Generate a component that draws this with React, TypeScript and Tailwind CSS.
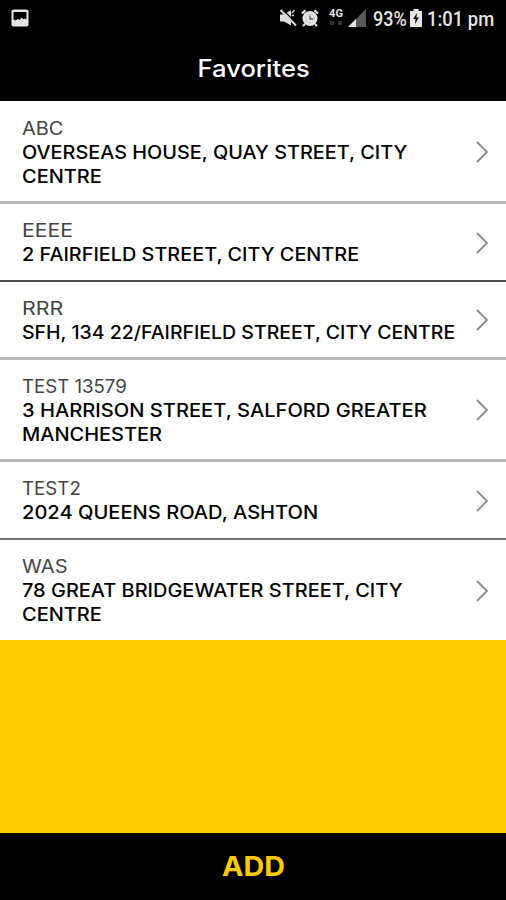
import clsx from 'clsx'

interface Line {
  text: string
  stretch: string
}

interface Favorite {
  name: Line
  address: Line[]
  className: string
}

const favorites: Favorite[] = [
  {
    name: { text: 'ABC', stretch: 'scale-x-[1.11]' },
    address: [
      { text: 'OVERSEAS HOUSE, QUAY STREET, CITY', stretch: 'scale-x-[1.103]' },
      { text: 'CENTRE', stretch: 'scale-x-[1.11]' }
    ],
    className: 'h-[103px] border-b-[3px] border-[#b8b8b8] pt-4'
  },
  {
    name: { text: 'EEEE', stretch: 'scale-x-[1.18]' },
    address: [{ text: '2 FAIRFIELD STREET, CITY CENTRE', stretch: 'scale-x-[1.102]' }],
    className: 'h-[78px] border-b-2 border-[#505050] pt-[15px]'
  },
  {
    name: { text: 'RRR', stretch: 'scale-x-[1.19]' },
    address: [
      { text: 'SFH, 134 22/FAIRFIELD STREET, CITY CENTRE', stretch: 'scale-x-[1.083]' }
    ],
    className: 'h-[78px] border-b-[3px] border-[#b8b8b8] pt-[15px]'
  },
  {
    name: { text: 'TEST 13579', stretch: 'scale-x-[1.035]' },
    address: [
      { text: '3 HARRISON STREET, SALFORD GREATER', stretch: 'scale-x-[1.118]' },
      { text: 'MANCHESTER', stretch: 'scale-x-[1.11]' }
    ],
    className: 'h-[102px] border-b-[3px] border-[#b8b8b8] pt-[15px]'
  },
  {
    name: { text: 'TEST2', stretch: 'scale-x-[1.04]' },
    address: [{ text: '2024 QUEENS ROAD, ASHTON', stretch: 'scale-x-[1.117]' }],
    className: 'h-[78px] border-b-2 border-[#707070] pt-[15px]'
  },
  {
    name: { text: 'WAS', stretch: 'scale-x-[1.12]' },
    address: [
      { text: '78 GREAT BRIDGEWATER STREET, CITY', stretch: 'scale-x-[1.108]' },
      { text: 'CENTRE', stretch: 'scale-x-[1.11]' }
    ],
    className: 'h-[100px] pt-[15px]'
  }
]

const PictureIcon = () => (
  <svg className="h-[18px] w-[18px]" viewBox="0 0 18 18">
    <rect x="0.500" y="0.500" width="17" height="17" rx="2" fill="#e6e6e6" />
    <path d="M2.500 3h13v7.500l-1.500-1-1.500 1-2-2-2 2.500-2-1-2 1.500-2-1z" fill="#000" />
  </svg>
)

const MuteIcon = () => (
  <svg className="h-[18px] w-[18px]" viewBox="0 0 18 18">
    <path d="M1 5.500h4L12 1v15.500L5 12.500H1z" fill="#ddd" />
    <path d="M13 4l2.500-3M13 6.500h2" stroke="#ddd" strokeWidth="1.300" />
    <path d="M4 1l14 14" stroke="#000" strokeWidth="1.300" />
    <path d="M1.500 1l15.500 15.500" stroke="#ddd" strokeWidth="2" />
  </svg>
)

const AlarmIcon = () => (
  <svg className="h-[18px] w-[18px]" viewBox="0 0 18 18" fill="none">
    <circle cx="9" cy="9.500" r="7.500" fill="#e8e8e8" />
    <path d="M1 4.500L4.500 1.200M17 4.500l-3.500-3.300M4 15l-2 2M14 15l2 2" stroke="#e8e8e8" strokeWidth="2.200" />
    <circle cx="9" cy="9.500" r="4.300" stroke="#bbb" strokeWidth="0.800" />
    <path d="M9 6.500V10h3" stroke="#555" strokeWidth="1.300" />
  </svg>
)

const SignalIcon = () => (
  <svg className="h-[18px] w-[18px]" viewBox="0 0 18 18">
    <path d="M0 18L18 0v18z" fill="#585858" />
    <path d="M0 18l8-8v8z" fill="#e8e8e8" />
  </svg>
)

const BatteryIcon = () => (
  <svg className="h-[18px] w-3" viewBox="0 0 12 18">
    <path d="M0 2h3.500V0h5v2H12v16H0z" fill="#e6e6e6" />
    <path d="M7 4L3 10h2.500L5 15l4-6.500H6.500z" fill="#111" />
  </svg>
)

const Chevron = () => (
  <svg className="h-[22px] w-3 shrink-0" viewBox="0 0 12 22" fill="none">
    <path d="M1 1l10 10L1 21" stroke="#8a8a8a" strokeWidth="1.800" />
  </svg>
)

const StatusBar = () => (
  <div className="flex h-9 items-center justify-between pr-[11px] pl-[11px]">
    <PictureIcon />
    <div className="flex items-center font-[Roboto,sans-serif] text-[#e6e6e6]">
      <MuteIcon />
      <div className="ml-1"><AlarmIcon /></div>
      <div className="ml-[9px] flex h-[18px] w-4 flex-col items-center text-[11px] leading-[10px] font-bold">
        <span>4G</span>
        <span className="mt-0.5 flex gap-1">
          <i className="h-1 w-1 bg-[#333]" />
          <i className="h-1 w-1 bg-[#333]" />
        </span>
      </div>
      <div className="ml-1"><SignalIcon /></div>
      <span className="ml-[7px] w-[35px] origin-left scale-x-[0.9] pt-px text-[20px] leading-[22px] font-medium whitespace-nowrap">
        93%
      </span>
      <div className="ml-0.5"><BatteryIcon /></div>
      <span className="ml-[5px] w-[68px] origin-left scale-x-[0.92] pt-px text-[20px] leading-[22px] font-medium whitespace-nowrap">
        1:01 pm
      </span>
    </div>
  </div>
)

const FavoriteRow = ({ name, address, className }: Favorite) => (
  <li className={clsx('flex items-start justify-between bg-white pr-[18px] pl-[22px]', className)}>
    <div className="text-[18px] leading-6 whitespace-nowrap">
      <div className="text-[#444]">
        <span className={clsx('inline-block origin-left', name.stretch)}>{name.text}</span>
      </div>
      {address.map((line) => (
        <div key={line.text} className="font-medium text-black">
          <span className={clsx('inline-block origin-left', line.stretch)}>{line.text}</span>
        </div>
      ))}
    </div>
    <div className="-mt-3.5 self-center"><Chevron /></div>
  </li>
)

const App = () => {
  return (
    <div className="flex h-[900px] w-[506px] flex-col overflow-hidden bg-[#ffcb00] font-[Inter,sans-serif]">
      <header className="h-[101px] bg-black">
        <StatusBar />
        <h1 className="flex h-[65px] items-center justify-center pl-0.5 text-[24px] font-medium text-white">
          <span className="scale-x-[1.065]">Favorites</span>
        </h1>
      </header>
      <ul>
        {favorites.map((favorite) => (
          <FavoriteRow key={favorite.name.text} {...favorite} />
        ))}
      </ul>
      <button className="mt-auto flex h-[67px] items-center justify-center bg-black pt-0.5 pl-px text-[27px] font-bold text-[#ffcb00]">
        <span className="scale-x-[1.065]">ADD</span>
      </button>
    </div>
  )
}

export default App
